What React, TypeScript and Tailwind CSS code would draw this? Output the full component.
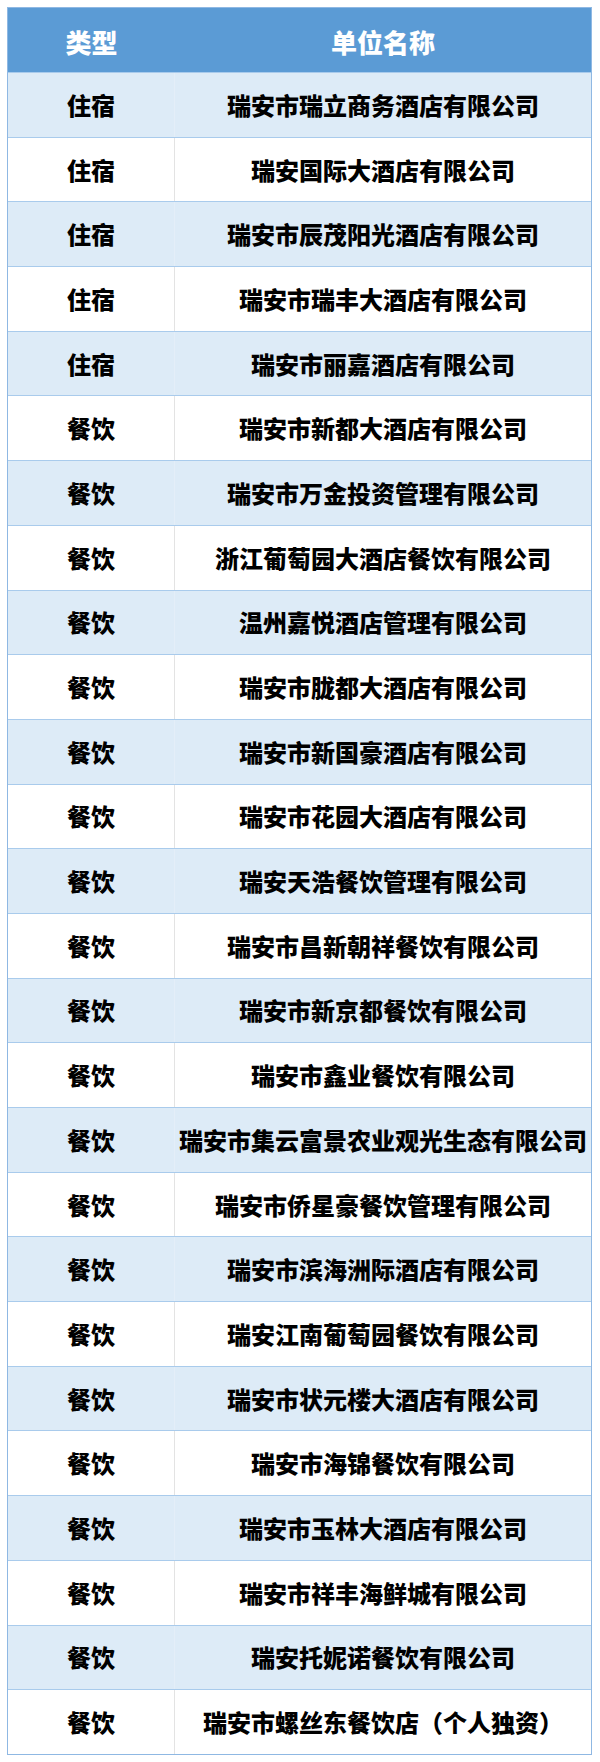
const rows: [string, string][] = [
  ['住宿', '瑞安市瑞立商务酒店有限公司'],
  ['住宿', '瑞安国际大酒店有限公司'],
  ['住宿', '瑞安市辰茂阳光酒店有限公司'],
  ['住宿', '瑞安市瑞丰大酒店有限公司'],
  ['住宿', '瑞安市丽嘉酒店有限公司'],
  ['餐饮', '瑞安市新都大酒店有限公司'],
  ['餐饮', '瑞安市万金投资管理有限公司'],
  ['餐饮', '浙江葡萄园大酒店餐饮有限公司'],
  ['餐饮', '温州嘉悦酒店管理有限公司'],
  ['餐饮', '瑞安市胧都大酒店有限公司'],
  ['餐饮', '瑞安市新国豪酒店有限公司'],
  ['餐饮', '瑞安市花园大酒店有限公司'],
  ['餐饮', '瑞安天浩餐饮管理有限公司'],
  ['餐饮', '瑞安市昌新朝祥餐饮有限公司'],
  ['餐饮', '瑞安市新京都餐饮有限公司'],
  ['餐饮', '瑞安市鑫业餐饮有限公司'],
  ['餐饮', '瑞安市集云富景农业观光生态有限公司'],
  ['餐饮', '瑞安市侨星豪餐饮管理有限公司'],
  ['餐饮', '瑞安市滨海洲际酒店有限公司'],
  ['餐饮', '瑞安江南葡萄园餐饮有限公司'],
  ['餐饮', '瑞安市状元楼大酒店有限公司'],
  ['餐饮', '瑞安市海锦餐饮有限公司'],
  ['餐饮', '瑞安市玉林大酒店有限公司'],
  ['餐饮', '瑞安市祥丰海鲜城有限公司'],
  ['餐饮', '瑞安托妮诺餐饮有限公司'],
  ['餐饮', '瑞安市螺丝东餐饮店（个人独资）'],
];

export default function App() {
  return (
    <div className="w-[600px] bg-white pt-[7px] pb-[8px] pl-[7px] font-['Microsoft_YaHei','Noto_Sans_CJK_SC',sans-serif]">
      <div className="w-[585px] border border-[#8fb8e3]">
        <div className="grid h-[64px] grid-cols-[167px_1fr] bg-[#5b9bd5] text-[26px] font-black text-white">
          <div className="flex items-center justify-center pt-[2px]">类型</div>
          <div className="flex items-center justify-center pt-[2px]">单位名称</div>
        </div>
        {rows.map(([type, name], i) => (
          <div
            key={i}
            className={
              i % 2 === 0
                ? 'grid h-[64.69px] grid-cols-[167px_1fr] border-t border-[#a9cbec] bg-[#ddebf7] text-[24px] font-black text-black'
                : 'grid h-[64.69px] grid-cols-[167px_1fr] border-t border-[#a9cbec] bg-white text-[24px] font-black text-black'
            }
          >
            <div
              className={
                i % 2 === 0
                  ? 'flex items-center justify-center border-r border-[#e4eef8]'
                  : 'flex items-center justify-center border-r border-[#e3e3e3]'
              }
            >
              {type}
            </div>
            <div className="flex items-center justify-center whitespace-nowrap">{name}</div>
          </div>
        ))}
      </div>
    </div>
  );
}
